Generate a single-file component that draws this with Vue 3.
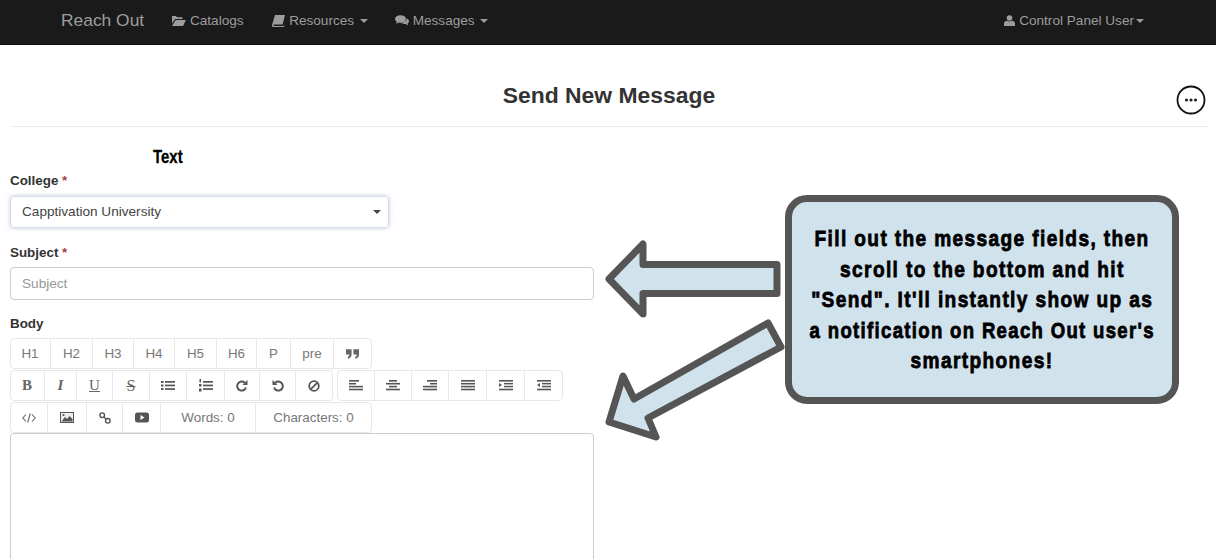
<script setup>
const row1 = [
  { t: 'H1', w: 41 }, { t: 'H2', w: 42 }, { t: 'H3', w: 41 }, { t: 'H4', w: 41 },
  { t: 'H5', w: 42 }, { t: 'H6', w: 40 }, { t: 'P', w: 34 }, { t: 'pre', w: 43 }, { i: 'quote', w: 37 }
]
const row2a = [
  { i: 'bold', w: 35 }, { i: 'italic', w: 32 }, { i: 'underline', w: 36 }, { i: 'strike', w: 37 },
  { i: 'ul', w: 37 }, { i: 'ol', w: 38 }, { i: 'redo', w: 35 }, { i: 'undo', w: 36 }, { i: 'ban', w: 36 }
]
const row2b = [
  { i: 'left', w: 38 }, { i: 'center', w: 37 }, { i: 'right', w: 37 },
  { i: 'justify', w: 38 }, { i: 'indent', w: 38 }, { i: 'outdent', w: 37 }
]
const row3 = [
  { i: 'code', w: 38 }, { i: 'image', w: 39 }, { i: 'link', w: 36 }, { i: 'video', w: 38 },
  { t: 'Words: 0', w: 95 }, { t: 'Characters: 0', w: 115 }
]
const lines = {
  left: [[0, 10], [0, 7], [0, 14], [0, 14]],
  center: [[3, 8], [0, 14], [3, 8], [0, 14]],
  right: [[4, 10], [7, 7], [0, 14], [0, 14]],
  justify: [[0, 14], [0, 14], [0, 14], [0, 14]]
}
const calloutLines = [
  { text: 'Fill out the message fields, then', scale: 0.85 },
  { text: 'scroll to the bottom and hit', scale: 0.85 },
  { text: '"Send". It\'ll instantly show up as', scale: 0.85 },
  { text: 'a notification on Reach Out user\'s', scale: 0.825 },
  { text: 'smartphones!', scale: 0.85 }
]
</script>

<template>
  <div class="page">
    <nav class="navbar">
      <a class="brand">Reach Out</a>
      <a class="nav-item catalogs">
        <svg class="nav-icon" viewBox="0 0 14 11" width="14" height="11"><path d="M0 1h4l1 1.300h5.500V4H3L0 8.500z M3.600 5H14l-3 6H0z" /></svg>
        Catalogs
      </a>
      <a class="nav-item resources">
        <svg class="nav-icon" viewBox="0 0 13 12" width="13" height="12"><path d="M3 0h10l-2.400 9.500H2.200c-.9 0-.9 1.400 0 1.400h9.600l.3-1 .4.200-.5 1.900H1.600C.4 12-.2 11 .1 9.800z" /></svg>
        Resources <span class="caret"></span>
      </a>
      <a class="nav-item messages">
        <svg class="nav-icon" viewBox="0 0 14 11" width="14" height="11"><ellipse cx="5.500" cy="4" rx="5.500" ry="3.800" /><path d="M2 6.500 1 9l3.500-2z" /><path d="M11.700 3.300C13 4 14 5 14 6.200c0 1-.6 1.800-1.500 2.300l.8 2-2.700-1.600c-2.200.2-4-.3-5-1.400 3.500.2 6.500-1.500 6.100-4.200z" /></svg>
        Messages <span class="caret"></span>
      </a>
      <a class="nav-item user">
        <svg class="nav-icon" viewBox="0 0 11 11" width="11" height="11"><circle cx="5.500" cy="3" r="2.800" /><path d="M0 11V8.500C0 7 1.500 6 3 5.800c1.500 1 3.500 1 5 0C9.500 6 11 7 11 8.500V11z" /></svg>
        Control Panel User<span class="caret near"></span>
      </a>
    </nav>

    <main class="content">
      <header class="title-row">
        <h1>Send New Message</h1>
        <svg class="more" viewBox="0 0 30 30" width="30" height="30">
          <circle cx="15" cy="15" r="13.500" fill="none" stroke="#111" stroke-width="1.800" />
          <circle cx="10.500" cy="15" r="1.600" fill="#222" />
          <circle cx="15" cy="15" r="1.600" fill="#222" />
          <circle cx="19.500" cy="15" r="1.600" fill="#222" />
        </svg>
      </header>

      <div class="text-tag"><span>Text</span></div>

      <label class="field-label college-label">College <span class="req">*</span></label>
      <div class="select">
        <span class="select-text">Capptivation University</span>
        <span class="select-caret"></span>
      </div>

      <label class="field-label subject-label">Subject <span class="req">*</span></label>
      <div class="input">Subject</div>

      <label class="field-label body-label">Body</label>
      <div class="toolbar">
        <div class="btn-row">
          <div class="group">
            <span v-for="b in row1" :key="b.t || b.i" class="tb" :style="{ width: b.w + 'px' }">
              {{ b.t }}
              <svg v-if="b.i === 'quote'" viewBox="0 0 14 10" width="13" height="10" fill="#666"><path d="M0 0h6v5.500C6 8 4.500 9.500 2 10V8c1-.3 1.600-1 1.600-2.500H0z" /><path d="M8 0h6v5.500C14 8 12.500 9.500 10 10V8c1-.3 1.600-1 1.600-2.500H8z" /></svg>
            </span>
          </div>
        </div>
        <div class="btn-row">
          <div class="group">
            <span v-for="b in row2a" :key="b.i" class="tb" :style="{ width: b.w + 'px' }">
              <span v-if="b.i === 'bold'" class="serif b">B</span>
              <span v-else-if="b.i === 'italic'" class="serif i">I</span>
              <span v-else-if="b.i === 'underline'" class="serif u">U</span>
              <span v-else-if="b.i === 'strike'" class="serif s">S</span>
              <svg v-else-if="b.i === 'ul'" viewBox="0 0 14 11" width="14" height="11" fill="#555"><rect x="0" y="1" width="2.500" height="2" /><rect x="0" y="4.500" width="2.500" height="2" /><rect x="0" y="8" width="2.500" height="2" /><rect x="4" y="1" width="10" height="1.700" /><rect x="4" y="4.600" width="10" height="1.700" /><rect x="4" y="8.200" width="10" height="1.700" /></svg>
              <svg v-else-if="b.i === 'ol'" viewBox="0 0 14 13" width="14" height="13" fill="#555"><rect x="0.500" y="0" width="1.500" height="3.500" /><rect x="0" y="5" width="2.500" height="2.500" /><rect x="0" y="9.500" width="2.500" height="3" /><rect x="4" y="2" width="10" height="1.700" /><rect x="4" y="5.600" width="10" height="1.700" /><rect x="4" y="9.200" width="10" height="1.700" /></svg>
              <svg v-else-if="b.i === 'redo'" viewBox="0 0 12 12" width="12" height="12" fill="none" stroke="#555" stroke-width="2"><path d="M10 7.500A4.500 4.500 0 1 1 8.800 2.800" /><path d="M11.500 0v5h-5z" fill="#555" stroke="none" /></svg>
              <svg v-else-if="b.i === 'undo'" viewBox="0 0 12 12" width="12" height="12" fill="none" stroke="#555" stroke-width="2"><path d="M2 7.500A4.500 4.500 0 1 0 3.200 2.800" /><path d="M.5 0v5h5z" fill="#555" stroke="none" /></svg>
              <svg v-else viewBox="0 0 12 12" width="12" height="12" fill="none" stroke="#555" stroke-width="1.800"><circle cx="6" cy="6" r="4.800" /><path d="M2.800 9.200l6.400-6.400" /></svg>
            </span>
          </div>
          <div class="group">
            <span v-for="b in row2b" :key="b.i" class="tb" :style="{ width: b.w + 'px' }">
              <svg v-if="lines[b.i]" viewBox="0 0 14 11" width="14" height="11" fill="#555">
                <rect v-for="(l, n) in lines[b.i]" :key="n" :x="l[0]" :y="n * 2.900" :width="l[1]" height="1.600" />
              </svg>
              <svg v-else viewBox="0 0 14 11" width="14" height="11" fill="#555">
                <rect x="0" y="0" width="14" height="1.600" /><rect x="5" y="2.900" width="9" height="1.500" /><rect x="5" y="5.800" width="9" height="1.500" /><rect x="0" y="8.700" width="14" height="1.600" />
                <path v-if="b.i === 'indent'" d="M0 3v4l3-2z" />
                <path v-else d="M3 3v4L0 5z" />
              </svg>
            </span>
          </div>
        </div>
        <div class="btn-row">
          <div class="group">
            <span v-for="b in row3" :key="b.t || b.i" class="tb" :style="{ width: b.w + 'px' }">
              {{ b.t }}
              <svg v-if="b.i === 'code'" viewBox="0 0 14 10" width="14" height="10" fill="none" stroke="#666" stroke-width="1.100"><path d="M4 1.500 .8 5 4 8.500M10 1.500 13.200 5 10 8.500M8.300 .5 5.700 9.500" /></svg>
              <svg v-else-if="b.i === 'image'" viewBox="0 0 14 11" width="14" height="11"><rect x=".5" y=".5" width="13" height="10" fill="#eee" stroke="#555" /><path d="M1.500 9.500 5 5l2 2 2.500-3 3 3v2.500z" fill="#555" /><circle cx="3.500" cy="3" r="1.100" fill="#555" /></svg>
              <svg v-else-if="b.i === 'link'" viewBox="0 0 12 12" width="12" height="12" fill="none" stroke="#555" stroke-width="1.400"><circle cx="3.200" cy="3.200" r="2.300" /><circle cx="8.800" cy="8.800" r="2.300" /><path d="M4.800 4.800l2.400 2.400" /></svg>
              <svg v-else-if="b.i === 'video'" viewBox="0 0 14 11" width="14" height="11"><rect x="0" y="0.500" width="14" height="10" rx="2.500" fill="#555" /><path d="M5.500 3v5l4-2.500z" fill="#fff" /></svg>
            </span>
          </div>
        </div>
      </div>
      <div class="editor"></div>
    </main>

    <svg class="arrows" viewBox="0 0 1216 559" width="1216" height="559">
      <path d="M609 279 643 244V264.500H777V293.500H643V314Z" />
      <path d="M768 323 781 347 648 418 656 437 609 422 623 376 634 399Z" />
    </svg>

    <aside class="callout">
      <div v-for="line in calloutLines" :key="line.text" class="callout-line">
        <span :style="{ transform: 'scaleX(' + line.scale + ')' }">{{ line.text }}</span>
      </div>
    </aside>
  </div>
</template>

<style scoped>
.page {
  position: relative;
  width: 1216px;
  height: 559px;
  overflow: hidden;
  background: #fff;
  font-family: "Liberation Sans", Arial, sans-serif;
  color: #333;
}
.navbar {
  display: flex;
  align-items: center;
  height: 45px;
  box-sizing: border-box;
  padding: 0 72px 3px 61px;
  background: #1a1a1a;
  border-bottom: 1px solid #111;
  color: #9d9d9d;
  font-size: 13.600px;
}
.brand {
  font-size: 17.400px;
}
.nav-item {
  display: flex;
  align-items: center;
  white-space: pre;
}
.nav-icon {
  fill: #9d9d9d;
}
.catalogs { margin-left: 28px; }
.resources { margin-left: 25px; }
.messages { margin-left: 27px; }
.user { margin-left: auto; }
.caret {
  width: 0;
  height: 0;
  margin-left: 2px;
  border-top: 4px solid #9d9d9d;
  border-left: 4px solid transparent;
  border-right: 4px solid transparent;
}
.caret.near { margin-left: 2px; }

.content {
  padding: 0 8px 0 10px;
}
.title-row {
  position: relative;
  height: 82px;
  display: flex;
  align-items: center;
  justify-content: center;
  padding-top: 20px;
  box-sizing: border-box;
  border-bottom: 1px solid #eee;
}
.title-row h1 {
  margin: 0;
  font-size: 22.900px;
  font-weight: 700;
  color: #333;
}
.more {
  position: absolute;
  right: 2px;
  top: 40px;
}
.text-tag {
  margin: 21px 0 0 143px;
  height: 18px;
  line-height: 18px;
  font-size: 18px;
  font-weight: 700;
  color: #000;
  -webkit-text-stroke: 0.3px #000;
}
.text-tag span {
  display: inline-block;
  transform: scaleX(0.83);
  transform-origin: left center;
}
.field-label {
  display: block;
  margin-top: 3px;
  height: 16px;
  line-height: 16px;
  font-size: 13.400px;
  font-weight: 700;
  color: #333;
}
.college-label { margin-top: 7px; }
.req { color: #a94442; }
.select {
  margin-top: 7px;
  width: 379px;
  height: 32px;
  box-sizing: border-box;
  display: flex;
  align-items: center;
  justify-content: space-between;
  padding: 0 6px 0 11px;
  border: 1px solid #d6dde8;
  border-radius: 4px;
  box-shadow: 0 0 4px rgba(120, 140, 190, 0.45);
  font-size: 13.600px;
  color: #444;
}
.select-text { margin-bottom: 2px; }
.select-caret {
  width: 0;
  height: 0;
  margin-right: 1px;
  border-top: 4px solid #444;
  border-left: 4px solid transparent;
  border-right: 4px solid transparent;
}
.subject-label { margin-top: 17px; }
.input {
  margin-top: 6px;
  width: 584px;
  height: 33px;
  box-sizing: border-box;
  display: flex;
  align-items: center;
  padding: 0 11px;
  border: 1px solid #ccc;
  border-radius: 4px;
  font-size: 13.600px;
  color: #999;
}
.body-label { margin-top: 16px; }
.toolbar {
  margin-top: 6px;
  display: flex;
  flex-direction: column;
  gap: 1px;
}
.btn-row {
  display: flex;
  gap: 5px;
  height: 31px;
}
.group {
  display: flex;
  border: 1px solid #e7e7e7;
  border-radius: 4px;
  margin-right: -1px;
}
.tb {
  display: flex;
  align-items: center;
  justify-content: center;
  box-sizing: border-box;
  border-right: 1px solid #e7e7e7;
  font-size: 13.400px;
  color: #777;
}
.tb:first-child { margin-left: -1px; }
.tb:last-child { border-right: 0; }
.serif {
  font-family: "Liberation Serif", serif;
  font-size: 15px;
  color: #666;
}
.b { font-weight: 700; }
.i { font-style: italic; font-weight: 700; }
.u { text-decoration: underline; }
.s { text-decoration: line-through; font-size: 16px; }
.editor {
  width: 584px;
  height: 160px;
  box-sizing: border-box;
  border: 1px solid #ccc;
  border-radius: 4px;
}
.arrows {
  position: absolute;
  left: 0;
  top: 0;
  pointer-events: none;
}
.arrows path {
  fill: #d0e2ec;
  stroke: #555;
  stroke-width: 7;
  stroke-linejoin: round;
}
.callout {
  position: absolute;
  left: 785px;
  top: 195px;
  width: 394px;
  height: 209px;
  box-sizing: border-box;
  padding-top: 22px;
  background: #d0e2ec;
  border: 7px solid #555;
  border-radius: 22px;
  font-size: 22.500px;
  line-height: 30.600px;
  font-weight: 700;
  letter-spacing: 1.600px;
  color: #000;
  -webkit-text-stroke: 0.8px #000;
}
.callout-line {
  display: flex;
  justify-content: center;
  white-space: nowrap;
}
.callout-line span {
  display: block;
}
</style>
